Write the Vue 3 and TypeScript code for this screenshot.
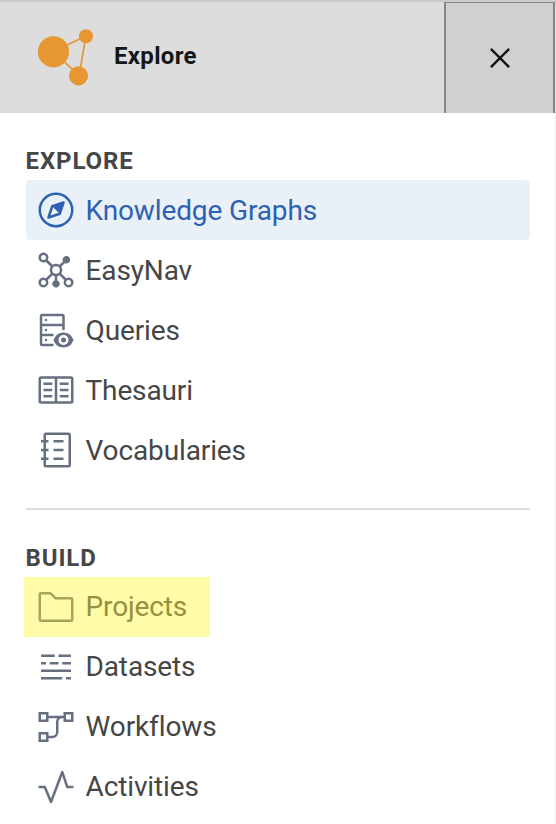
<script setup lang="ts">
interface NavItem {
  label: string
  icon: string
  state?: 'active' | 'marked'
}
interface NavSection {
  title: string
  items: NavItem[]
}

const icons: Record<string, string> = {
  compass:
    'M22.707 9.293a1 1 0 0 0-1.023-.242l-9 3a1 1 0 0 0-.633.633l-3 9a1 1 0 0 0 1.265 1.265l9-3a1 1 0 0 0 .633-.633l3-9a1 1 0 0 0-.242-1.023zM11.581 20.419l2.209-6.628 4.419 4.419zM16 30a14 14 0 1 1 14-14 14 14 0 0 1-14 14zm0-26a12 12 0 1 0 12 12A12 12 0 0 0 16 4z',
  network:
    'M6 2a4 4 0 1 0 1.9 7.5l3.9 3.8a5 5 0 0 0 0 5.4l-3.9 3.8A4 4 0 1 0 9.4 24l3.9-3.8a5 5 0 0 0 1.7.7v3.3a3 3 0 1 0 2 0v-3.3a5 5 0 0 0 1.7-.7l3.9 3.8a4 4 0 1 0 1.5-1.5l-3.9-3.8a5 5 0 0 0 0-5.4l2.8-2.8a3 3 0 1 0-1.4-1.4l-2.9 2.7a5 5 0 0 0-5.4 0L9.4 8A4 4 0 0 0 6 2zM6 4a2 2 0 1 1 0 4a2 2 0 1 1 0-4zM16 13a3 3 0 1 1 0 6a3 3 0 1 1 0-6zM6 24a2 2 0 1 1 0 4a2 2 0 1 1 0-4zM26 24a2 2 0 1 1 0 4a2 2 0 1 1 0-4z',
  query:
    'M5 3A2 2 0 0 0 3 5V27a2 2 0 0 0 2 2h9v-2H5v-6h9v-2H5v-6h16v3h2V5a2 2 0 0 0-2-2zM5 5h16v6H5zM8 7a1 1 0 1 0 0 2a1 1 0 1 0 0-2zM8 15a1 1 0 1 0 0 2a1 1 0 1 0 0-2zM8 23a1 1 0 1 0 0 2a1 1 0 1 0 0-2zM22 22a2 2 0 1 0 0 4a2 2 0 1 0 0-4zM29.777 23.479A8.64 8.64 0 0 0 22 18a8.64 8.64 0 0 0-7.777 5.479L14 24l.223.522A8.64 8.64 0 0 0 22 30a8.64 8.64 0 0 0 7.777-5.478L30 24zM22 28a4 4 0 1 1 4-4a4 4 0 0 1-4 4z',
  book:
    'M19 10h7v2h-7zM19 15h7v2h-7zM19 20h7v2h-7zM6 10h7v2H6zM6 15h7v2H6zM6 20h7v2H6zM28 5H4a2 2 0 0 0-2 2v18a2 2 0 0 0 2 2h24a2 2 0 0 0 2-2V7a2 2 0 0 0-2-2zM4 7h11v18H4zM17 25V7h11v18z',
  catalog:
    'M14 8h8v2h-8zM14 15h8v2h-8zM14 22h8v2h-8zM26 2H8a2 2 0 0 0-2 2v4H4v2h2v5H4v2h2v5H4v2h2v4a2 2 0 0 0 2 2h18a2 2 0 0 0 2-2V4a2 2 0 0 0-2-2zm0 26H8v-4h2v-2H8v-5h2v-2H8v-5h2V8H8V4h18z',
  folder:
    'M11.17 6l3.42 3.41.58.59H28v16H4V6h7.17m0-2H4a2 2 0 0 0-2 2v20a2 2 0 0 0 2 2h24a2 2 0 0 0 2-2V10a2 2 0 0 0-2-2H16l-3.41-3.41A2 2 0 0 0 11.17 4z',
  dataset:
    'M4 6h11v2H4zM18 6h10v2H18zM4 12h4v2H4zM11 12h7v2h-7zM21 12h7v2h-7zM4 18h24v2H4zM4 24h17v2H4zM24 24h4v2h-4z',
  flow:
    'M22 4v3H10V4H2v8h8V9h7.02A4.98 4.98 0 0 0 16 12v8a3 3 0 0 1-3 3h-3v-3H2v8h8v-3h3a5 5 0 0 0 5-5v-8a3 3 0 0 1 3-3h1v3h8V4zM4 6h4v4H4zM4 22h4v4H4zM24 6h4v4h-4z',
  activity:
    'M12 29a1 1 0 0 1-.92-.62L6.33 17H2v-2h5a1 1 0 0 1 .92.62L12 25.28 20.06 3.65A1 1 0 0 1 21 3a1 1 0 0 1 .93.68L25.72 15H30v2h-5a1 1 0 0 1-.95-.68L21 7l-8.06 21.35A1 1 0 0 1 12 29z',
}

const sections: NavSection[] = [
  {
    title: 'Explore',
    items: [
      { label: 'Knowledge Graphs', icon: 'compass', state: 'active' },
      { label: 'EasyNav', icon: 'network' },
      { label: 'Queries', icon: 'query' },
      { label: 'Thesauri', icon: 'book' },
      { label: 'Vocabularies', icon: 'catalog' },
    ],
  },
  {
    title: 'Build',
    items: [
      { label: 'Projects', icon: 'folder', state: 'marked' },
      { label: 'Datasets', icon: 'dataset' },
      { label: 'Workflows', icon: 'flow' },
      { label: 'Activities', icon: 'activity' },
    ],
  },
]
</script>

<template>
  <div class="panel">
    <header class="header">
      <svg class="logo" width="56" height="58" viewBox="0 0 56 58">
        <path d="M15.5 23.5 48 8 41 47.5z" fill="none" stroke="#e79634" stroke-width="1.7" />
        <circle cx="15.5" cy="23.8" r="15.6" />
        <circle cx="48" cy="8.3" r="7" />
        <circle cx="40.5" cy="47.8" r="9.6" />
      </svg>
      <span class="brand">Explore</span>
      <button class="close" aria-label="Close">
        <svg width="40" height="40" viewBox="0 0 32 32">
          <path d="M24 9.4 22.6 8 16 14.6 9.4 8 8 9.4l6.6 6.6L8 22.6 9.4 24l6.6-6.6 6.6 6.6 1.4-1.4-6.6-6.6z" />
        </svg>
      </button>
    </header>
    <nav class="nav">
      <section v-for="s in sections" :key="s.title" class="section">
        <h2 class="title">{{ s.title }}</h2>
        <a v-for="i in s.items" :key="i.label" class="item" :class="i.state">
          <svg class="icon" width="40" height="40" viewBox="0 0 32 32">
            <path :d="icons[i.icon]" fill-rule="evenodd" />
          </svg>
          <span class="label">{{ i.label }}</span>
        </a>
      </section>
    </nav>
  </div>
</template>

<style>
body {
  margin: 0;
  background: #fff;
}
</style>

<style scoped>
.panel {
  box-sizing: border-box;
  height: 824px;
  overflow: hidden;
  font-family: Roboto, "Liberation Sans", sans-serif;
  background: #fff;
}
.header {
  box-sizing: border-box;
  height: 113px;
  padding-right: 1px;
  display: flex;
  align-items: stretch;
  border-top: 2px solid #cbcbcb;
  background: #ddd;
}
.logo {
  margin: 26px 20px 0 38px;
  fill: #e79634;
}
.brand {
  flex: 1;
  font-size: 24px;
  font-weight: 700;
  line-height: 108px;
  letter-spacing: 0.32px;
  color: #161616;
}
.close {
  box-sizing: border-box;
  width: 111px;
  padding: 0 0 0 1px;
  display: flex;
  align-items: center;
  justify-content: center;
  border: solid #868686;
  border-width: 1px 2px 0;
  background: #d0d0d0;
  fill: #161616;
}
.nav {
  box-sizing: border-box;
  height: 711px;
  padding: 35px 25px 0 26px;
  border-right: 1px solid #f2f2f2;
}
.section + .section {
  margin-top: 28px;
  padding-top: 35px;
  border-top: 2px solid #dcdcdc;
}
.title {
  margin: 0 0 0 -0.5px;
  height: 32px;
  font-size: 24px;
  font-weight: 700;
  line-height: 26px;
  letter-spacing: 0.9px;
  text-transform: uppercase;
  color: #464646;
}
.item {
  height: 60px;
  display: flex;
  align-items: center;
  gap: 9.5px;
  padding-left: 10px;
  border-radius: 4px;
  font-size: 28px;
  line-height: 36px;
  letter-spacing: -0.12px;
  color: #464646;
}
.section:first-child .label {
  padding-top: 2px;
}
.icon {
  flex: none;
  fill: #667080;
}
.active {
  background: #e9f0f8;
  color: #2d61b2;
}
.active .icon {
  fill: #2d61b2;
}
.marked {
  width: 174px;
  margin-left: -2px;
  padding-left: 12px;
  border-radius: 0;
  background: #fffba9;
  color: #96913c;
}
.marked .icon {
  fill: #a5a658;
}
</style>
